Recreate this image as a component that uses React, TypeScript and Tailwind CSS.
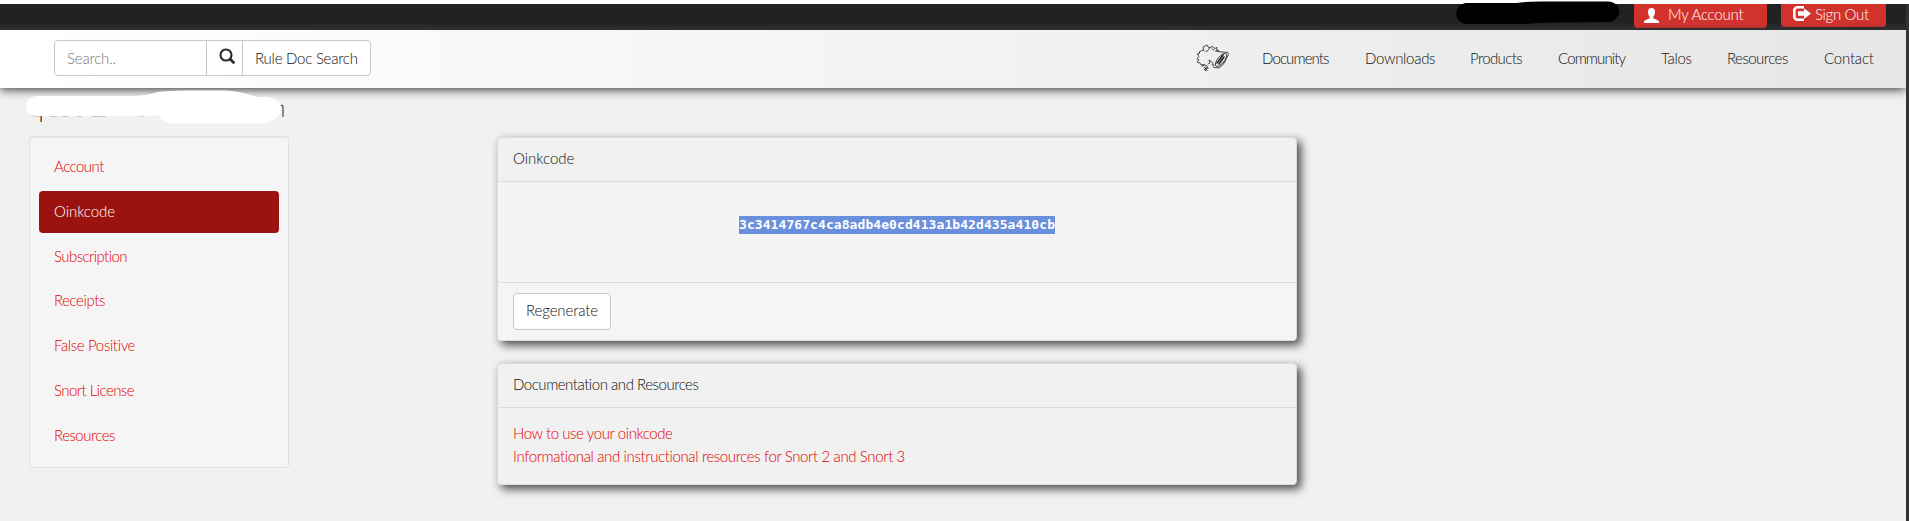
import React from "react";

const navItems = [
  { label: "Documents", style: "w-[103px] tracking-[-0.88px]" },
  { label: "Downloads", style: "w-[105px] tracking-[-0.3px]" },
  { label: "Products", style: "w-[88px] tracking-[-0.61px]" },
  { label: "Community", style: "w-[103px] tracking-[-0.86px]" },
  { label: "Talos", style: "w-[66px] tracking-[-0.31px]" },
  { label: "Resources", style: "w-[97px] tracking-[-0.52px]" },
  { label: "Contact", style: "w-[82px] tracking-[-0.2px]" },
];

const sideItems = [
  { label: "Account", style: "tracking-[-0.5px]" },
  { label: "Oinkcode", style: "tracking-[-0.04px]", active: true },
  { label: "Subscription", style: "tracking-[-0.57px]" },
  { label: "Receipts", style: "tracking-[-0.42px]" },
  { label: "False Positive", style: "tracking-[-0.36px]" },
  { label: "Snort License", style: "tracking-[-0.55px]" },
  { label: "Resources", style: "tracking-[-0.5px]" },
];

function SearchIcon() {
  return (
    <svg className="h-[17px] w-[17px]" viewBox="0 0 17 17" fill="none" stroke="#2b2b2b">
      <circle cx="7" cy="7" r="5.5" strokeWidth="2.1" />
      <path d="M11 11L15.3 15.3" strokeWidth="2.8" />
    </svg>
  );
}

function UserIcon() {
  return (
    <svg className="h-[15px] w-[15px]" viewBox="0 0 15 15" fill="#fff">
      <path d="M7.5 0C9.7 0 11 1.6 11 4c0 2-.7 3.700-1.700 4.800v1.500l4.400 2c.8.400 1.300.9 1.300 1.700v1H0v-1c0-.8.500-1.300 1.300-1.700l4.400-2V8.800C4.700 7.700 4 6 4 4c0-2.400 1.300-4 3.500-4z" />
    </svg>
  );
}

function SignOutIcon() {
  return (
    <svg className="h-[15px] w-[18px]" viewBox="0 0 18 15">
      <path d="M11 1.300H4.500a3.200 3.200 0 0 0-3.200 3.200v6a3.200 3.200 0 0 0 3.200 3.200H11" fill="none" stroke="#fff" strokeWidth="2.600" />
      <path d="M5 5.300h6V2.300l7 5.300-7 5.400V9.800H5z" fill="#fff" />
    </svg>
  );
}

function PigLogo() {
  return (
    <svg className="h-[28px] w-[34px]" viewBox="0 0 34 28" fill="none" stroke="#222" strokeWidth="0.8" strokeLinecap="round" strokeLinejoin="round">
      <path d="M7 6L3 8l1 1-3 1 2 2-2 3 2 1-2 2 3 1 1 2 3-.5" />
      <path d="M8 7L7 3l4-2 1 2 2 .5-2 3-2 1" />
      <path d="M14 3.500l3-1 1.500 2 2.500-1-.5 2 2 1-3 .5M16 5l2 1" />
      <path d="M21 7.500l11 1c1 1 0 3-1 5l-3 6-5 4.500-5-.5-2-3M12 20l2-1-1-3 3 2 2 3" />
      <ellipse cx="25" cy="16" rx="3.400" ry="8" transform="rotate(39 25 16)" />
      <path d="M27 11l-6 8M28 13l-5 7" strokeWidth="1.600" />
      <path d="M6 22l3-1 2 1 1 2M8 23l3 3M10 23v4l-2-2M12 24l-2 1" />
    </svg>
  );
}

function Panel({ children, height }: { children: React.ReactNode; height: string }) {
  return (
    <section className={`w-[800px] rounded-[4px] border border-[#dcdcdc] bg-[#f1f1f1] shadow-[4px_4px_10px_rgba(0,0,0,0.7)] ${height}`}>
      {children}
    </section>
  );
}

export default function App() {
  return (
    <div className="relative flex h-[521px] w-[1909px] overflow-hidden bg-white pt-1 font-['Lato',sans-serif] text-[15px] leading-[22px] font-light text-[#111]">
      <div className="w-[1906px] bg-[#f1f1f1]">
        <div className="flex h-[26px] justify-end bg-linear-to-b from-[#222] from-70% to-[#303030] pr-5 text-white">
          <div className="mr-[14px] flex h-6 w-[133px] rounded-b-[4px] bg-linear-to-b from-[#d2322d] from-80% to-[#bd302b] pl-[10px]">
            <span className="pt-[4px]"><UserIcon /></span>
            <span className="ml-[9px] -mt-px tracking-[-0.22px]">My Account</span>
          </div>
          <div className="flex h-[23px] w-[105px] rounded-b-[4px] bg-linear-to-b from-[#d2322d] from-80% to-[#bd302b] pl-[12px]">
            <span className="pt-[2px]"><SignOutIcon /></span>
            <span className="ml-[4px] -mt-px tracking-[-0.33px]">Sign Out</span>
          </div>
        </div>

        <header className="relative flex h-[58px] bg-linear-to-r from-white to-[#e6e6e6] pt-[10px] shadow-[0_1px_10px_rgba(0,0,0,0.85)] [clip-path:inset(0_0_-20px_0)]">
          <div className="ml-[54px] flex h-9 w-[317px] rounded-[4px] border border-[#c8c8c8] bg-white">
            <div className="w-[152px] border-r border-[#c8c8c8] pt-[6px] pl-3 tracking-[-0.18px] text-[#777]">Search..</div>
            <div className="w-9 border-r border-[#c8c8c8] pt-[7px] pl-[12px]"><SearchIcon /></div>
            <div className="pt-[6px] pl-[12px] tracking-[-0.24px] whitespace-nowrap">Rule Doc Search</div>
          </div>
          <nav className="ml-auto flex">
            <div className="w-[66px] pt-[4px]"><PigLogo /></div>
            {navItems.map((item) => (
              <a key={item.label} className={`pt-[7px] whitespace-nowrap ${item.style}`}>{item.label}</a>
            ))}
          </nav>
        </header>

        <main className="flex items-start pt-[48px] pl-[29px]">
          <aside className="flex h-[332px] w-[260px] flex-col gap-[3px] rounded-[3px] border border-[#e1e1e1] bg-[#f5f5f5] p-[9px] shadow-[inset_0_1px_2px_rgba(0,0,0,0.06)]">
            {sideItems.map((item) => (
              <a
                key={item.label}
                className={`h-[41.8px] shrink-0 rounded-[4px] pt-[9px] pl-[15px] ${item.style} ${item.active ? "bg-[#9a1311] text-white" : "text-[#e60000]"}`}
              >
                {item.label}
              </a>
            ))}
          </aside>

          <div className="ml-[208px] flex flex-col gap-[22px] pt-px">
            <Panel height="h-[204px]">
              <div className="h-[44px] border-b border-[#dcdcdc] pt-[9px] pl-[15px]">Oinkcode</div>
              <div className="flex h-[101px] justify-center border-b border-[#dcdcdc] bg-[#f4f4f4] pt-[34px]">
                <code className="h-[18px] w-[316px] bg-[#6a8fdc] font-['DejaVu_Sans_Mono',monospace] text-[13px] leading-[18px] font-bold tracking-[0.074px] whitespace-nowrap text-white">3c3414767c4ca8adb4e0cd413a1b42d435a410cb</code>
              </div>
              <div className="h-[57px] rounded-b-[3px] bg-[#f5f5f5] pt-[10px] pl-[15px]">
                <button className="flex h-[37px] w-[98px] rounded-[4px] border border-[#c8c8c8] bg-white pt-[5px] pl-3 tracking-[-0.12px]">Regenerate</button>
              </div>
            </Panel>
            <Panel height="h-[122px]">
              <div className="h-[44px] border-b border-[#dcdcdc] pt-[9px] pl-[15px] tracking-[-0.46px]">Documentation and Resources</div>
              <div className="flex flex-col gap-px pt-[14px] pl-[15px] text-[#e60000]">
                <a className="tracking-[-0.41px]">How to use your oinkcode</a>
                <a className="tracking-[-0.37px]">Informational and instructional resources for Snort 2 and Snort 3</a>
              </div>
            </Panel>
          </div>
        </main>
      </div>
      <div className="grow bg-[#333]" />

      <svg className="absolute top-0 left-[1450px] h-[28px] w-[180px]" viewBox="0 0 180 28">
        <path d="M16 3H66Q76 1.500 90 1.500H158C173 2 173 20 158 22L100 22.500Q88 22.500 76 24H16C3 22 3 5 16 3z" fill="#000" />
      </svg>
      <svg className="absolute top-[86px] left-[20px] h-[40px] w-[270px]" viewBox="0 0 270 40">
        <path d="M12 29.500q4 2 8 1M30 30.500h7M42 30.500h6M57 30.500h5M72 30.500h14M118 30h6" fill="none" stroke="#bbb" strokeWidth="0.8" />
        <path d="M20.500 29v7" stroke="#c08040" strokeWidth="1" />
        <path d="M21.500 29v7" stroke="#406a9a" strokeWidth="1" />
        <path d="M260 20q3-2 3 2v9" fill="none" stroke="#345" strokeWidth="1.200" />
        <path d="M263.500 22v9" stroke="#c08040" strokeWidth="1" />
        <path d="M16 10H112Q126 10 138 6Q150 4 175 4.500H205Q220 5 237 11H247C268 14 266 34 242 37.500H152Q142 37 139 29Q125 30 110 30H16C2 28 3 12 16 10z" fill="#fff" />
      </svg>
    </div>
  );
}
